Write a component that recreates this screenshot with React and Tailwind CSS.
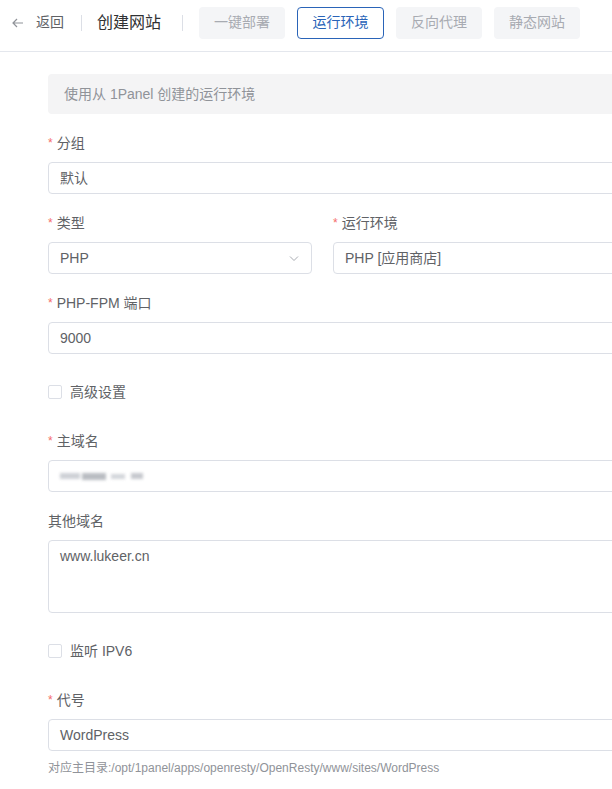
import React from 'react';

const font = { fontFamily: '"Liberation Sans", "Noto Sans CJK SC", sans-serif' };

function Label({ children, required }) {
  return (
    <div className="h-[20px] flex items-center text-[14px] text-[#606266] mb-[9px]">
      {required && <span className="text-[#f56c6c] mr-[4px] text-[12px]">*</span>}
      {children}
    </div>
  );
}

function Input({ value, children, className = '' }) {
  return (
    <div className={`h-[32px] border border-[#dcdfe6] rounded-[4px] bg-white flex items-center px-[11px] text-[14px] text-[#606266] ${className}`}>
      {value}
      {children}
    </div>
  );
}

function Check({ label }) {
  return (
    <div className="h-[20px] flex items-center text-[14px] text-[#606266]">
      <span className="w-[14px] h-[14px] border border-[#dcdfe6] rounded-[2px] bg-white mr-[8px]" />
      {label}
    </div>
  );
}

export default function App() {
  const tabs = ['一键部署', '运行环境', '反向代理', '静态网站'];

  return (
    <div className="w-[612px] h-[789px] bg-white overflow-hidden" style={font}>
      {/* Header */}
      <div className="h-[52px] pb-[6px] border-b border-[#e4e7ed] flex items-center w-[700px]">
        <div className="flex items-center pl-[11px] text-[14px] text-[#606266]">
          <svg width="14" height="14" viewBox="0 0 14 14" fill="none" stroke="#909399" strokeWidth="1.2">
            <path d="M12 7H2M6 3L2 7l4 4" />
          </svg>
          <span className="ml-[11px]">返回</span>
        </div>
        <div className="w-px h-[16px] bg-[#dcdfe6] ml-[17px]" />
        <div className="ml-[15px] text-[16px] text-[#303133]">创建网站</div>
        <div className="w-px h-[16px] bg-[#dcdfe6] ml-[21px]" />
        <div className="flex gap-[12px] ml-[16px]">
          {tabs.map((t) =>
            t === '运行环境' ? (
              <div key={t} className="w-[87px] h-[32px] rounded-[4px] border border-[#2a64b8] bg-white text-[#2a64b8] text-[14px] flex items-center justify-center">
                {t}
              </div>
            ) : (
              <div key={t} className="w-[86px] h-[32px] rounded-[4px] bg-[#f4f5f7] text-[#a8abb2] text-[14px] flex items-center justify-center">
                {t}
              </div>
            )
          )}
        </div>
      </div>

      {/* Form */}
      <div className="pl-[48px] w-[700px]">
        <div className="mt-[22px] h-[40px] rounded-[4px] bg-[#f4f4f5] flex items-center px-[16px] text-[14px] text-[#909399]">
          使用从 1Panel 创建的运行环境
        </div>

        <div className="mt-[19px]">
          <Label required>分组</Label>
          <Input value="默认" />
        </div>

        <div className="mt-[19px] grid grid-cols-[264px_1fr] gap-x-[21px]">
          <div>
            <Label required>类型</Label>
            <Input className="justify-between">
              <span>PHP</span>
              <svg width="12" height="12" viewBox="0 0 12 12" fill="none" stroke="#a8abb2" strokeWidth="1">
                <path d="M2 4.5l4 4 4-4" />
              </svg>
            </Input>
          </div>
          <div>
            <Label required>运行环境</Label>
            <Input value="PHP [应用商店]" />
          </div>
        </div>

        <div className="mt-[19px]">
          <Label required>PHP-FPM 端口</Label>
          <Input value="9000" />
        </div>

        <div className="mt-[28px]">
          <Check label="高级设置" />
        </div>

        <div className="mt-[29px]">
          <Label required>主域名</Label>
          <Input>
            <span className="flex items-center gap-[2px] blur-[1.5px] opacity-80">
              <span className="w-[20px] h-[6px] bg-[#c2c5cc]" />
              <span className="w-[24px] h-[7px] bg-[#a8acb3]" />
              <span className="w-[14px] h-[5px] bg-[#c8cbd1] ml-[3px]" />
              <span className="w-[12px] h-[6px] bg-[#b8bbc2] ml-[4px]" />
            </span>
          </Input>
        </div>

        <div className="mt-[19px]">
          <Label>其他域名</Label>
          <div className="h-[73px] border border-[#dcdfe6] rounded-[4px] bg-white px-[11px] pt-[5px] text-[14px] text-[#606266]">
            www.lukeer.cn
          </div>
        </div>

        <div className="mt-[28px]">
          <Check label="监听 IPV6" />
        </div>

        <div className="mt-[29px]">
          <Label required>代号</Label>
          <Input value="WordPress" />
          <div className="mt-[8px] text-[12px] text-[#909399]">
            对应主目录:/opt/1panel/apps/openresty/OpenResty/www/sites/WordPress
          </div>
        </div>
      </div>
    </div>
  );
}
